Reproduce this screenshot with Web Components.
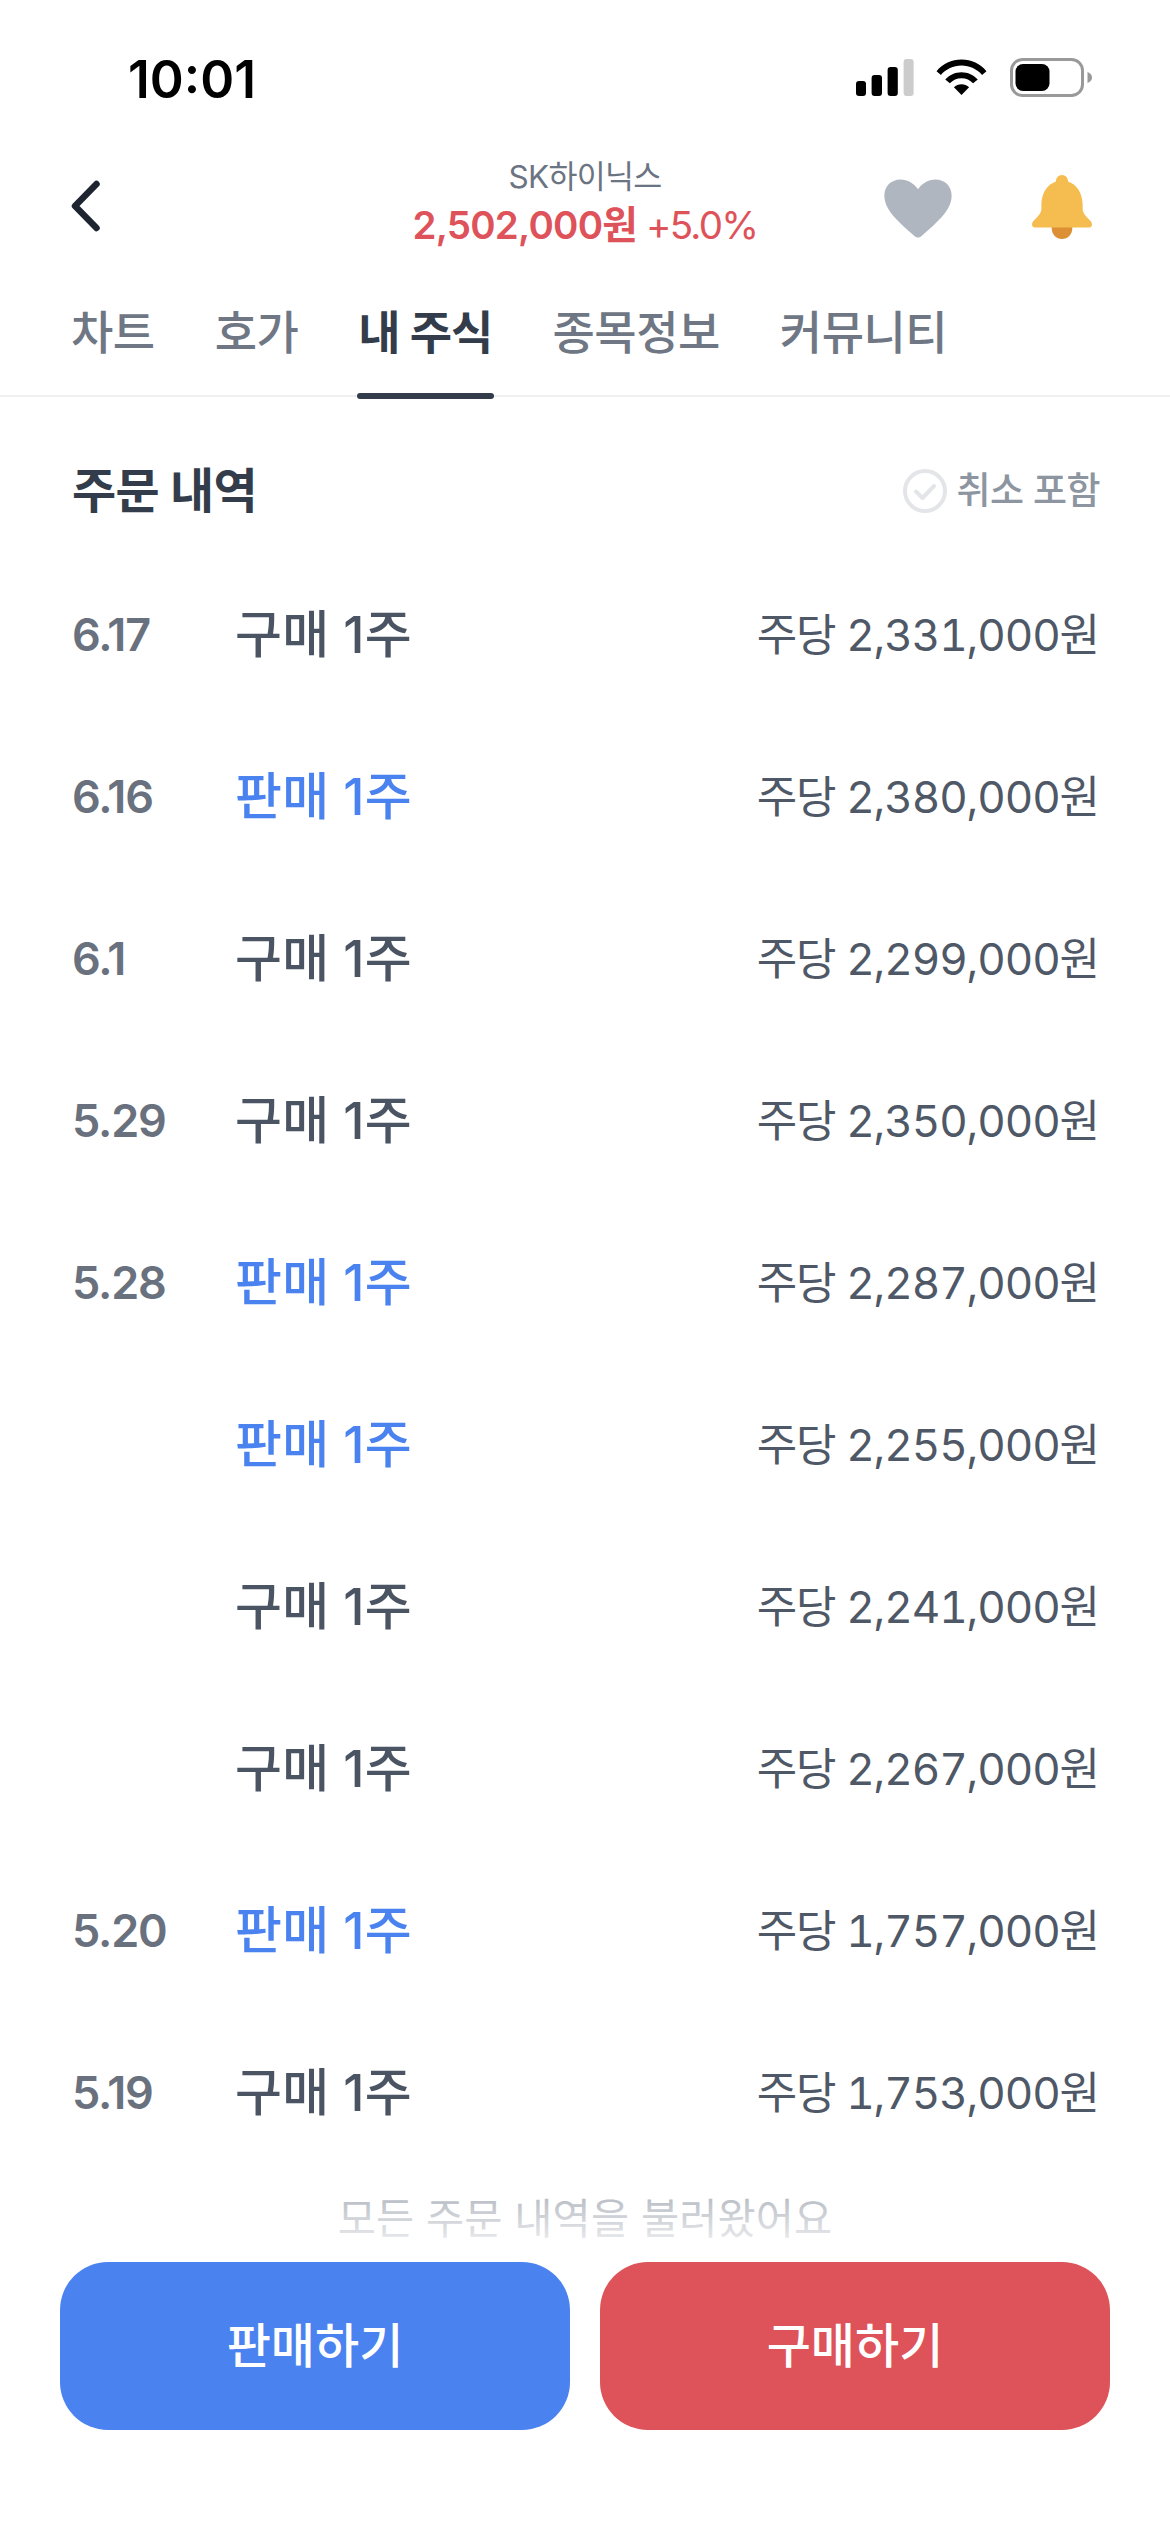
<!DOCTYPE html>
<html lang="ko"><head><meta charset="utf-8">
<style>
html,body{margin:0;padding:0;background:#fff}
body{font-family:Inter,"Noto Sans CJK KR",sans-serif;width:1170px;height:2532px;overflow:hidden}
</style></head>
<body>
<stock-app>
  <status-bar slot="top"></status-bar>
  <stock-header slot="top"></stock-header>
  <tab-bar slot="top"></tab-bar>
  <order-list>
    <order-row date="6.17" kind="구매" price="2,331,000"></order-row>
    <order-row date="6.16" kind="판매" price="2,380,000"></order-row>
    <order-row date="6.1" kind="구매" price="2,299,000"></order-row>
    <order-row date="5.29" kind="구매" price="2,350,000"></order-row>
    <order-row date="5.28" kind="판매" price="2,287,000"></order-row>
    <order-row date="" kind="판매" price="2,255,000"></order-row>
    <order-row date="" kind="구매" price="2,241,000"></order-row>
    <order-row date="" kind="구매" price="2,267,000"></order-row>
    <order-row date="5.20" kind="판매" price="1,757,000"></order-row>
    <order-row date="5.19" kind="구매" price="1,753,000"></order-row>
  </order-list>
  <action-bar slot="bottom"></action-bar>
</stock-app>
<script>
const KR='Inter,"Noto Sans CJK KR",sans-serif';
function def(name,html,init){
  customElements.define(name,class extends HTMLElement{
    constructor(){super();this.attachShadow({mode:'open'}).innerHTML=html;}
    connectedCallback(){init&&init(this,this.shadowRoot);}
  });
}
def('stock-app',`<style>
:host{display:flex;flex-direction:column;width:1170px;height:2532px;position:relative;font-family:${KR}}
.main{flex:1;min-height:0}
</style><slot name="top"></slot><div class="main"><slot></slot></div><slot name="bottom"></slot>`);

def('status-bar',`<style>
:host{display:flex;height:138px;box-sizing:border-box;padding:50px 78px 0 128px;justify-content:space-between;align-items:flex-start}
.t{font:600 51.5px/58px Inter,sans-serif;color:#000}
.i{display:flex;align-items:flex-start;margin-top:8px}
svg{display:block}
</style><div class="t">10:01</div>
<div class="i">
<svg style="margin-top:1px" width="58" height="37" viewBox="0 0 58 37"><rect x="0" y="22" width="10" height="15" rx="3"/><rect x="15.600" y="16" width="10.400" height="21" rx="3"/><rect x="31.600" y="8" width="10.200" height="29" rx="3"/><rect x="47.600" y="0" width="10" height="37" rx="3" fill="#ccc"/></svg>
<svg style="margin:1px 0 0 22px" width="51" height="37" viewBox="0 0 47 38" preserveAspectRatio="none"><path d="M0.500 12.500C6 5 14.500 0.500 23.500 0.500S41 5 46.500 12.500L42.500 16.500C37.800 10.500 31 6.800 23.500 6.800S9.200 10.500 4.500 16.500Z M8.500 21C12.300 16.300 17.600 13.500 23.500 13.500S34.700 16.300 38.500 21L34.200 25C31.500 21.700 27.700 19.800 23.500 19.800S15.500 21.700 12.800 25Z M16.500 29C18.400 27.200 20.800 26 23.500 26S28.600 27.200 30.500 29L23.500 37Z"/></svg>
<svg style="margin-left:23px" width="82" height="39" viewBox="0 0 82 39"><rect x="1.500" y="1.500" width="71" height="36" rx="11" fill="none" stroke="#999" stroke-width="3"/><rect x="5.500" y="6" width="34" height="27" rx="7.500"/><path d="M77.500 14C80.500 15 82 17 82 19.500S80.500 24 77.500 25Z" fill="#999"/></svg>
</div>`);

def('stock-header',`<style>
:host{display:block;height:130px}
.row{display:grid;grid-template-columns:1fr auto 1fr;height:130px;box-sizing:border-box;padding:0 78px 0 70px}
.back{margin-top:42px}
.center{display:flex;flex-direction:column;align-items:center;margin-top:21px;padding-left:8px}
.name{font:400 31.5px/36px ${KR};letter-spacing:-.7px;color:#6b7482}
.price{font:600 38.5px/50px ${KR};letter-spacing:-.8px;color:#de525a;margin-top:5px;white-space:nowrap}
.price span{font-weight:400;letter-spacing:-1.7px;margin-left:9px}
.ic{display:flex;align-items:flex-start;justify-content:flex-end}
svg{display:block}
</style><div class="row">
<svg class="back" width="34" height="52" viewBox="0 0 34 52"><path d="M26.500 4 5 26l21.500 22" fill="none" stroke="#1e2530" stroke-width="6.500" stroke-linecap="round" stroke-linejoin="round"/></svg>
<div class="center"><div class="name">SK하이닉스</div><div class="price">2,502,000원<span>+5.0%</span></div></div>
<div class="ic">
<svg style="margin-top:41px" width="68" height="59" viewBox="0 0 72 60" preserveAspectRatio="none"><path d="M36 59.500C34.800 59.500 33.500 59 32.500 58.100 15 43.500 3.300 33 1 22 -2 9 6.500 0.500 17.500 0.500 25 0.500 32 4.500 36 10.500 40 4.500 47 0.500 54.500 0.500 65.500 0.500 74 9 71 22 68.700 33 57 43.500 39.500 58.100 38.500 59 37.200 59.500 36 59.500Z" fill="#b0b6bf"/></svg>
<svg style="margin:37px 0 0 80px" width="60" height="64" viewBox="0 0 64 64" preserveAspectRatio="none"><path d="M21 50h22v3c0 6.500-4.800 11-11 11s-11-4.500-11-11Z" fill="#dc8f35"/><path d="M25.500 6.500C25.500 2.800 28.500 0 32 0s6.500 2.800 6.500 6.500C48 9.500 54 18.500 54 30v4c0 4.500 5 8.500 9 12.500 2 3 1 6-3 6H4c-4 0-5-3-3-6 4-4 9-8 9-12.500v-4C10 18.500 16 9.500 25.500 6.500Z" fill="#f5bd4f"/></svg>
</div></div>`);

def('tab-bar',`<style>
:host{display:flex;position:relative;height:128px;box-sizing:border-box;padding:34px 0 0 71px}
:host::after{content:"";position:absolute;left:0;right:0;bottom:-1px;height:2px;background:#eeeff1}
.t{font:500 46px/60px ${KR};color:#6f7784;letter-spacing:-.5px;white-space:nowrap;position:relative;margin-right:60px}
.a{font-weight:700;color:#333c4b;letter-spacing:-.9px}
.a::after{content:"";position:absolute;z-index:1;left:-1px;right:-1px;top:91px;height:6px;border-radius:3px;background:#333c4b}
</style><div class="t">차트</div><div class="t">호가</div><div class="t a">내 주식</div><div class="t">종목정보</div><div class="t">커뮤니티</div>`);

def('order-list',`<style>
:host{display:block;position:relative}
.head{display:flex;justify-content:space-between;align-items:center;height:60px;padding:65px 70px 33px 72px}
h2{margin:0;font:700 48px/60px ${KR};color:#333c4b;letter-spacing:-.6px}
.c{display:flex;align-items:center;font:500 37px/46px ${KR};letter-spacing:-.5px;color:#8d95a1}
svg{display:block;margin-right:9px}
.rows{display:flex;flex-direction:column}
.end{font:400 41.500px/50px ${KR};letter-spacing:.1px;color:#b4b9c1;text-align:center;margin-top:20px}
</style><div class="head"><h2>주문 내역</h2><div class="c"><svg width="44" height="44" viewBox="0 0 44 44"><circle cx="22" cy="22" r="20" fill="none" stroke="#e3e5e9" stroke-width="4"/><path d="M13 22.500l6.500 6.500L31 17" fill="none" stroke="#e3e5e9" stroke-width="4" stroke-linecap="round" stroke-linejoin="round"/></svg>취소 포함</div></div>
<div class="rows"><slot></slot></div><div class="end">모든 주문 내역을 불러왔어요</div>`);

def('order-row',`<style>
:host{display:flex;align-items:center;height:162px;box-sizing:border-box;padding:0 71px 0 72px}
.d{width:163px;font:600 45px/60px ${KR};letter-spacing:-1.200px;color:#69717e}
.k{font:500 51px/60px ${KR};letter-spacing:.3px;color:#4b5462}
.k.s{color:#4a82ef}
.p{margin-left:auto;font:400 44px/60px ${KR};font-variant-numeric:tabular-nums;letter-spacing:-1.100px;color:#4f5866;white-space:nowrap}
</style><div class="d"></div><div class="k"></div><div class="p"></div>`,(h,s)=>{
  s.querySelector('.d').textContent=h.getAttribute('date');
  const k=s.querySelector('.k'),t=h.getAttribute('kind');
  k.textContent=t+' 1주'; if(t==='판매')k.classList.add('s');
  s.querySelector('.p').textContent='주당 '+h.getAttribute('price')+'원';
});

def('action-bar',`<style>
:host{display:flex;position:relative;gap:30px;padding:0 60px;height:270px;box-sizing:border-box;align-items:flex-start;background:#fff}
:host::before{content:"";position:absolute;left:0;right:0;bottom:100%;height:70px;background:linear-gradient(rgba(255,255,255,0),#fff)}
.b{flex:1;height:168px;border-radius:48px;display:flex;align-items:center;justify-content:center;font:500 48px/60px ${KR};letter-spacing:0;color:#fff}
.s{background:#4a82ef}.r{background:#de525a}
</style><div class="b s">판매하기</div><div class="b r">구매하기</div>`);
</script>
</body></html>
